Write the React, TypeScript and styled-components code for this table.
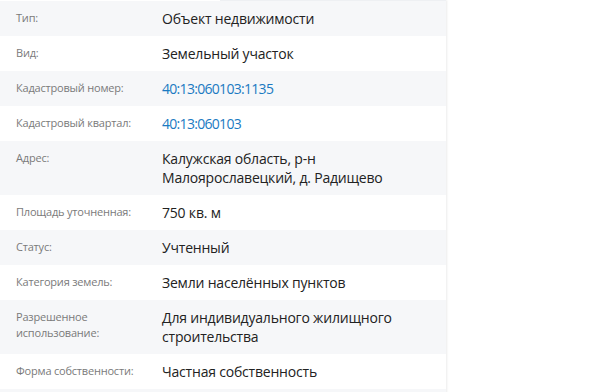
import styled, { createGlobalStyle } from "styled-components";

const GlobalStyle = createGlobalStyle`
  body {
    margin: 0;
    background: #ffffff;
    font-family: "Open Sans", "Noto Sans", sans-serif;
  }
`;

const Panel = styled.div`
  width: 446px;
  background: #ffffff;
  box-shadow: 1px 0 2px rgba(0, 0, 0, 0.08);
`;

const TopLine = styled.div`
  height: 1px;
  margin-left: 220px;
  background: #eef0f3;
`;

const Row = styled.div<{ $shaded: boolean }>`
  display: flex;
  gap: 16px;
  padding: 8px 16px;
  background: ${(p) => (p.$shaded ? "#f6f7f9" : "#ffffff")};
`;

const Label = styled.div`
  width: 130px;
  flex-shrink: 0;
  font-size: 11px;
  line-height: 16px;
  padding-top: 1px;
  letter-spacing: -0.2px;
  color: #7a7a7a;
`;

const Value = styled.div<{ $link?: boolean }>`
  flex: 1;
  font-size: 14px;
  line-height: 19px;
  letter-spacing: ${(p) => (p.$link ? "-0.7px" : "-0.2px")};
  color: ${(p) => (p.$link ? "#1b7ac2" : "#222222")};
`;

const rows: { label: string; value: string; link?: boolean }[] = [
  { label: "Тип:", value: "Объект недвижимости" },
  { label: "Вид:", value: "Земельный участок" },
  { label: "Кадастровый номер:", value: "40:13:060103:1135", link: true },
  { label: "Кадастровый квартал:", value: "40:13:060103", link: true },
  { label: "Адрес:", value: "Калужская область, р-н Малоярославецкий, д. Радищево" },
  { label: "Площадь уточненная:", value: "750 кв. м" },
  { label: "Статус:", value: "Учтенный" },
  { label: "Категория земель:", value: "Земли населённых пунктов" },
  { label: "Разрешенное использование:", value: "Для индивидуального жилищного строительства" },
  { label: "Форма собственности:", value: "Частная собственность" },
  { label: "\u00a0", value: "\u00a0" },
];

const App = () => {
  return (
    <>
      <GlobalStyle />
      <Panel>
        <TopLine />
        {rows.map((r, i) => (
          <Row key={i} $shaded={i % 2 === 0}>
            <Label>{r.label}</Label>
            <Value $link={r.link}>{r.value}</Value>
          </Row>
        ))}
      </Panel>
    </>
  );
};

export default App;
